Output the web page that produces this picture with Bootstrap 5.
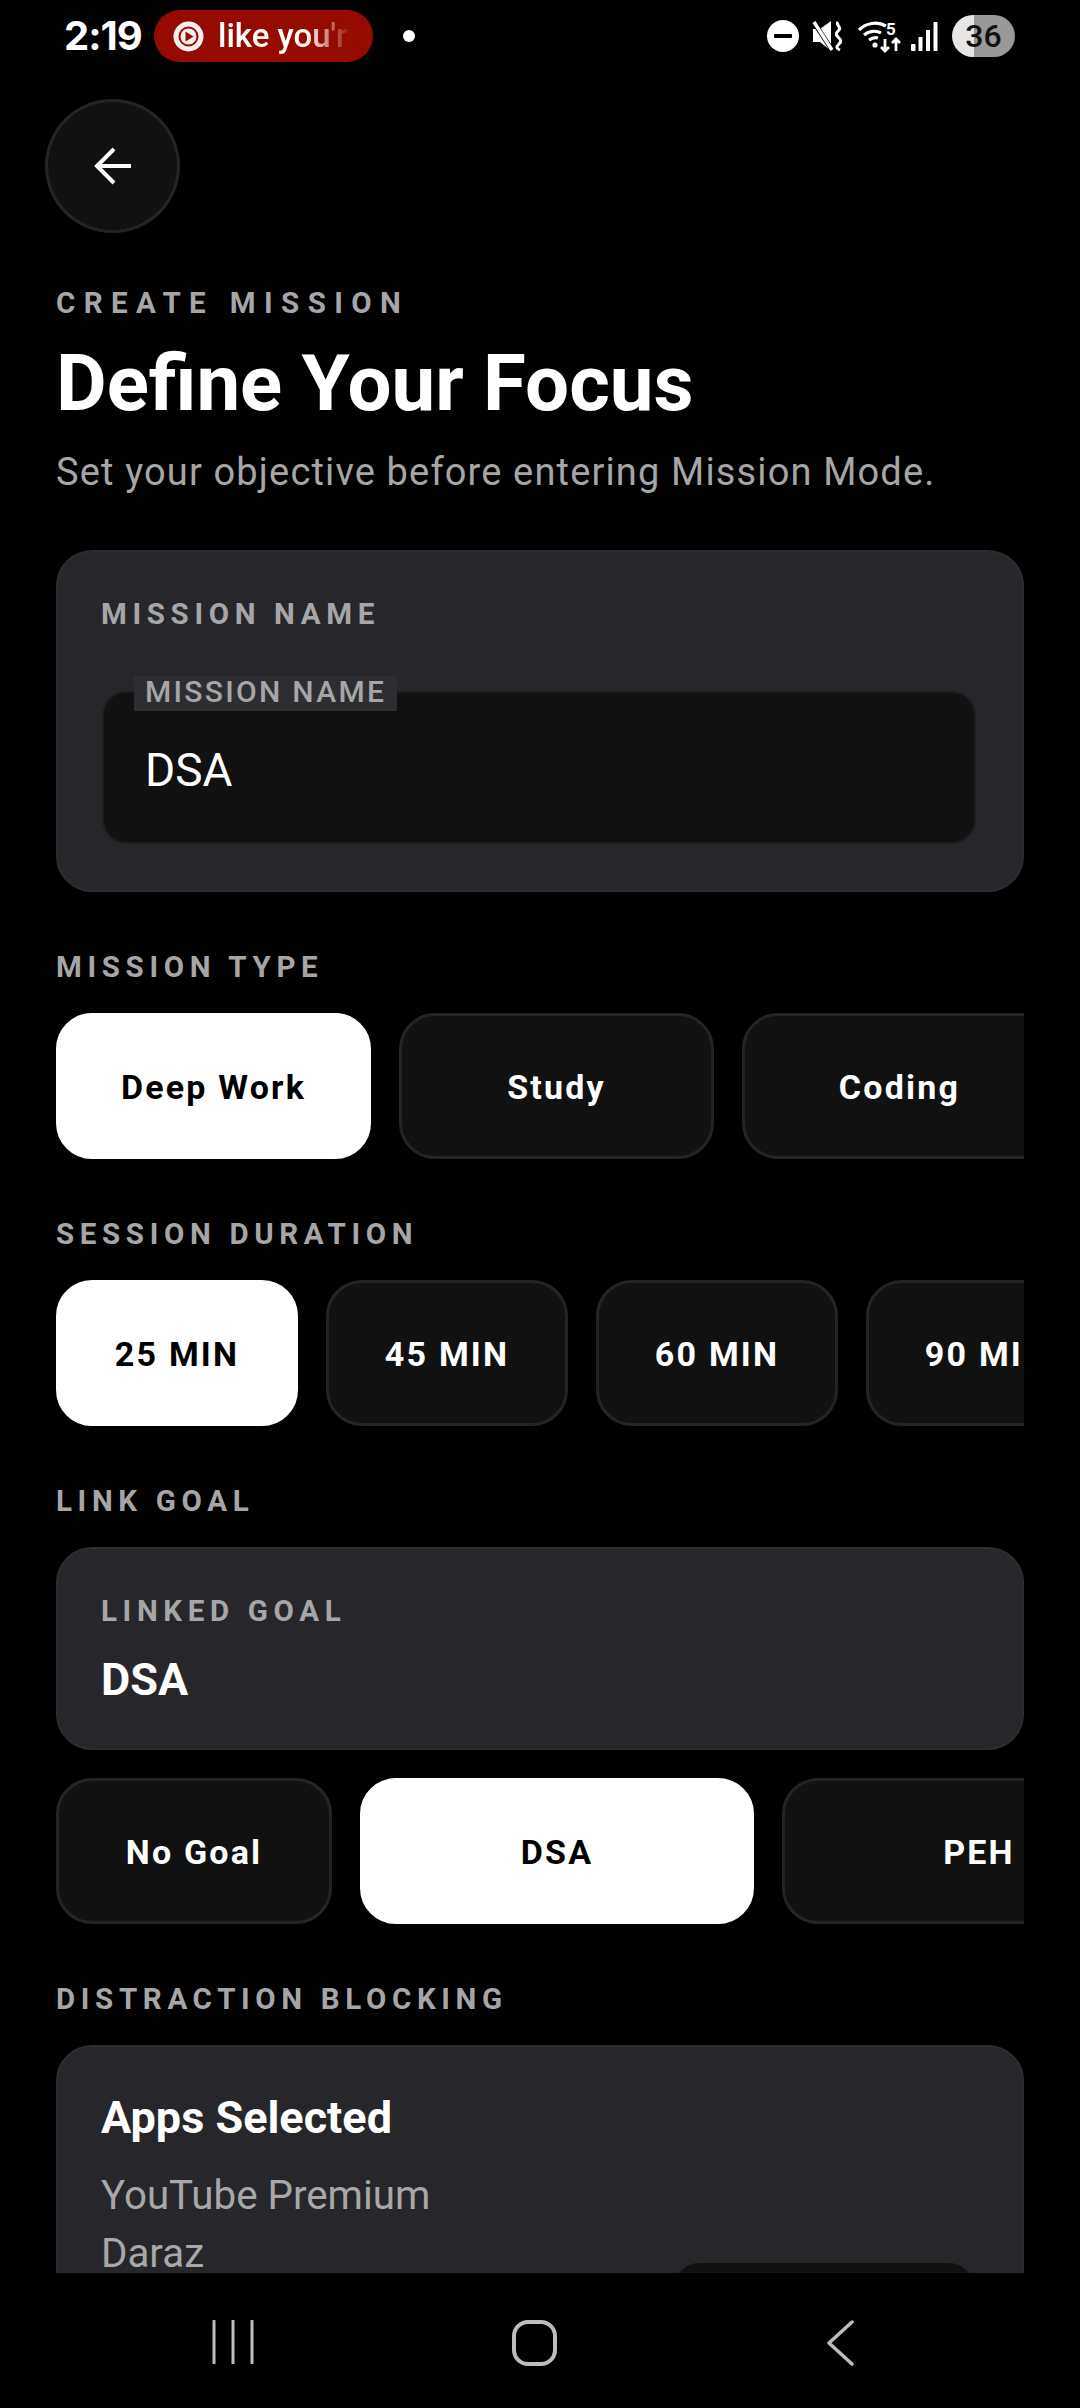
<!DOCTYPE html>
<html lang="en">
<head>
    <meta charset="UTF-8">
    <meta name="viewport" content="width=device-width, initial-scale=1.0">
    <title>Create Mission</title>
    <link href="https://cdn.jsdelivr.net/npm/bootstrap@5.3.0/dist/css/bootstrap.min.css" rel="stylesheet">
    <style>
        body {
            background: #000;
            font-family: Roboto, "Liberation Sans", sans-serif;
            color: #fff;
            width: 1080px;
            height: 2408px;
            overflow: hidden;
        }

        /* status bar */
        .status-bar { height: 72px; padding: 10px 65px 0 64px; }
        .status-time { font-size: 40px; font-weight: 700; line-height: 52px; width: 90px; font-family: Inter, Roboto, sans-serif; letter-spacing: -1px; }
        .status-pill { width: 219px; height: 52px; background: #950b00; border-radius: 26px; padding-left: 19px; gap: 14px; overflow: hidden; }
        .status-pill-text {
            font-size: 33px; font-weight: 500; white-space: nowrap; width: 133px; overflow: hidden;
            -webkit-mask-image: linear-gradient(to right, #000 66%, transparent 100%);
            mask-image: linear-gradient(to right, #000 66%, transparent 100%);
        }
        .status-dot { width: 12px; height: 12px; background: #fff; border-radius: 50%; margin: 20px 0 0 30px; }
        .status-icons { height: 52px; }
        .status-icons svg { overflow: visible; }
        .battery {
            width: 63px; height: 42px; border-radius: 21px; color: #111; font-size: 32px; font-weight: 500;
            background: linear-gradient(to right, #e6e6e6 35%, #999 35%);
            margin-left: 14px;
        }

        /* scrolling part */
        .screen { height: 2201px; padding: 0 56px; overflow: hidden; }
        .back-btn {
            width: 135px; height: 134px; margin: 27px 0 0 -11px; border-radius: 50%;
            background: #111; border: 3px solid #242424; padding: 0 0 0 1px;
        }
        .back-btn:hover { background: #111; border-color: #242424; }
        .eyebrow { font-size: 29.5px; font-weight: 700; letter-spacing: 5.65px; color: #a6a6a8; line-height: 36px; margin: 0; white-space: nowrap; }
        .eyebrow-top { margin-top: 52px; letter-spacing: 8.4px; }
        .page-title { font-size: 78px; font-weight: 700; line-height: 90px; margin: 18px 0 0; }
        .page-sub { font-size: 38px; color: #a6a6a6; line-height: 48px; letter-spacing: 1.15px; margin: 19px 0 0; white-space: nowrap; }

        .panel { background: #27272b; border: 2px solid #2d2d31; border-radius: 36px; color: #fff; }
        .panel-name { height: 342px; margin-top: 54px; padding: 44px 43px 0; }
        .name-wrap { margin: 59px 0 0 1px; width: 874px; }
        .name-input {
            height: 153px; background: #111; border: 2px solid #1e1e20; border-radius: 24px; color: #fff;
            font-size: 46px; padding: 4px 41px 0; box-shadow: none;
        }
        .name-input:focus { background: #111; color: #fff; border-color: #1e1e20; box-shadow: none; }
        .name-float {
            position: absolute; left: 32px; top: -15px; padding: 0 11px; height: 35px;
            background: #2e2e32; color: #a6a6a8; font-size: 30px; font-weight: 500; letter-spacing: 2.3px; line-height: 31px;
            white-space: nowrap;
        }

        .section-label { margin-top: 57px; }
        .chip-row { width: 968px; overflow: hidden; gap: 28px; margin-top: 28px; }
        .chip {
            flex: none; height: 146px; border-radius: 36px; background: #111; border: 3px solid #242424;
            color: #fff; font-size: 34px; font-weight: 700; letter-spacing: 2.2px; padding: 2px 0 0; white-space: nowrap;
        }
        .chip:hover { background: #111; color: #fff; border-color: #242424; }
        .chip.is-on, .chip.is-on:hover { background: #fff; color: #000; border-color: #fff; }
        .w-type { width: 315px; }
        .w-time { width: 242px; }
        .w-none { width: 276px; }
        .w-goal { width: 394px; }

        .panel-goal { height: 203px; margin-top: 28px; padding: 44px 43px 0; }
        .goal-name { font-size: 45px; font-weight: 700; line-height: 52px; margin-top: 25px; }
        .panel-apps { height: 340px; margin-top: 28px; padding: 44px 43px 0; position: relative; }
        .apps-title { font-size: 45px; font-weight: 700; line-height: 54px; margin: 0 0 22px; }
        .apps-line { font-size: 40.3px; color: #a8a8a8; line-height: 58px; }
        .apps-btn { position: absolute; right: 49px; top: 216px; width: 298px; height: 90px; background: #111; border-radius: 24px; }

        /* android nav */
        .nav-keys { height: 135px; padding-left: 212px; padding-top: 47px; }
        .nav-keys svg { display: block; }
    </style>
</head>
<body>

<div class="status-bar d-flex align-items-start">
    <div class="status-time">2:19</div>
    <div class="status-pill d-flex align-items-center">
        <svg width="31" height="31" viewBox="0 0 31 31" class="flex-shrink-0">
            <circle cx="15.5" cy="15.5" r="15" fill="#fbeeee"/>
            <circle cx="15.5" cy="15.5" r="9" fill="none" stroke="#950b00" stroke-width="2"/>
            <path d="M12.5 10.5l8 5-8 5z" fill="#950b00"/>
        </svg>
        <span class="status-pill-text">like you're</span>
    </div>
    <div class="status-dot"></div>
    <div class="status-icons d-flex align-items-center ms-auto">
        <svg width="32" height="32" viewBox="0 0 32 32" style="margin-right:14px">
            <circle cx="16" cy="16" r="16" fill="#fff"/>
            <rect x="7" y="14" width="18" height="4" rx="1" fill="#000"/>
        </svg>
        <svg width="30" height="30" viewBox="0 0 30 30" style="margin-right:15px">
            <path d="M0 8h7l11-8v30L7 21H0z" fill="#fff"/>
            <path d="M0 0l19 29" stroke="#000" stroke-width="5"/>
            <path d="M1 1l18 28" stroke="#fff" stroke-width="3.4"/>
            <path d="M25 1c-3 3 4 5 1 8s-4 4-1 7 4 4 1 7-3 4 1 6" fill="none" stroke="#fff" stroke-width="3"/>
        </svg>
        <svg width="44" height="31" viewBox="0 0 44 31" style="margin-right:9px">
            <path d="M1 9C8 2 19 0 28 5M6 14c5-4 12-5 17-2M11 19c3-2 6-3 9-2" fill="none" stroke="#fff" stroke-width="3.2"/>
            <circle cx="17" cy="24" r="2.6" fill="#fff"/>
            <text x="28" y="14" font-size="17" font-weight="700" fill="#fff" font-family="Roboto">5</text>
            <path d="M27 18v12m-4-4l4 4 4-4M38 30V18m-4 4l4-4 4 4" fill="none" stroke="#fff" stroke-width="2.8"/>
        </svg>
        <svg width="27" height="29" viewBox="0 0 27 29">
            <rect x="0" y="22" width="4.5" height="7" rx="1" fill="#fff"/>
            <rect x="7.5" y="15" width="4" height="14" fill="#fff"/>
            <rect x="15" y="8" width="4" height="21" fill="#fff"/>
            <rect x="22.5" y="0" width="4" height="29" fill="#fff"/>
        </svg>
        <div class="battery d-flex align-items-center justify-content-center">36</div>
    </div>
</div>

<div class="screen">
    <button class="btn back-btn d-flex align-items-center justify-content-center" type="button" aria-label="Back">
        <svg width="38" height="38" viewBox="0 0 38 38">
            <path d="M37 19H3M20 2L3 19l17 17" fill="none" stroke="#fff" stroke-width="4"/>
        </svg>
    </button>

    <p class="eyebrow eyebrow-top">CREATE MISSION</p>
    <h1 class="page-title">Define Your Focus</h1>
    <p class="page-sub">Set your objective before entering Mission Mode.</p>

    <div class="card panel panel-name">
        <p class="eyebrow">MISSION NAME</p>
        <div class="name-wrap position-relative">
            <input class="form-control name-input" type="text" value="DSA" aria-label="Mission name">
            <span class="name-float">MISSION NAME</span>
        </div>
    </div>

    <p class="eyebrow section-label">MISSION TYPE</p>
    <div class="chip-row d-flex">
        <button class="btn chip w-type is-on" type="button">Deep Work</button>
        <button class="btn chip w-type" type="button">Study</button>
        <button class="btn chip w-type" type="button">Coding</button>
    </div>

    <p class="eyebrow section-label">SESSION DURATION</p>
    <div class="chip-row d-flex">
        <button class="btn chip w-time is-on" type="button">25 MIN</button>
        <button class="btn chip w-time" type="button">45 MIN</button>
        <button class="btn chip w-time" type="button">60 MIN</button>
        <button class="btn chip w-time" type="button">90 MIN</button>
    </div>

    <p class="eyebrow section-label">LINK GOAL</p>
    <div class="card panel panel-goal">
        <p class="eyebrow">LINKED GOAL</p>
        <div class="goal-name">DSA</div>
    </div>
    <div class="chip-row d-flex">
        <button class="btn chip w-none" type="button">No Goal</button>
        <button class="btn chip w-goal is-on" type="button">DSA</button>
        <button class="btn chip w-goal" type="button">PEH</button>
    </div>

    <p class="eyebrow section-label">DISTRACTION BLOCKING</p>
    <div class="card panel panel-apps">
        <h2 class="apps-title">Apps Selected</h2>
        <div class="apps-line">YouTube Premium</div>
        <div class="apps-line">Daraz</div>
        <div class="apps-btn"></div>
    </div>
</div>

<div class="nav-keys d-flex align-items-start">
    <svg width="42" height="44" viewBox="0 0 42 44">
        <path d="M2 1v42M21 1v42M40 1v42" stroke="#bdbdbd" stroke-width="3" stroke-linecap="round"/>
    </svg>
    <svg width="46" height="46" viewBox="0 0 46 46" style="margin-left:258px">
        <rect x="2" y="2" width="41" height="42" rx="14" fill="none" stroke="#bdbdbd" stroke-width="4"/>
    </svg>
    <svg width="30" height="46" viewBox="0 0 30 46" style="margin-left:267px">
        <path d="M27 2L4 23l23 21" fill="none" stroke="#bdbdbd" stroke-width="3.5" stroke-linecap="round" stroke-linejoin="round"/>
    </svg>
</div>

<script src="https://cdn.jsdelivr.net/npm/bootstrap@5.3.0/dist/js/bootstrap.bundle.min.js"></script>
</body>
</html>
